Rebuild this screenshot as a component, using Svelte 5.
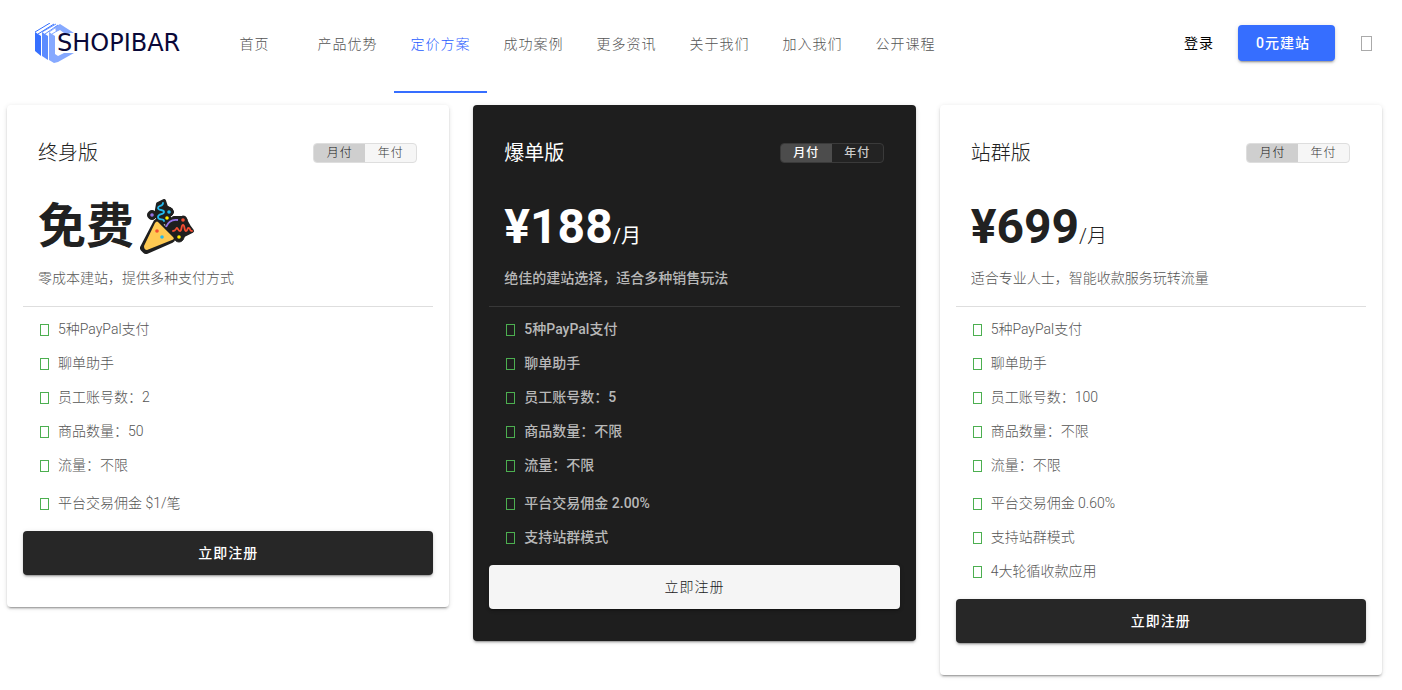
<script>
  const navItems = ['首页', '产品优势', '定价方案', '成功案例', '更多资讯', '关于我们', '加入我们', '公开课程'];
  const activeItem = '定价方案';

  const plans = [
    {
      name: '终身版',
      price: '免费',
      celebrate: true,
      summary: '零成本建站，提供多种支付方式',
      limits: ['5种PayPal支付', '聊单助手', '员工账号数：2', '商品数量：50', '流量：不限'],
      extras: ['平台交易佣金 $1/笔']
    },
    {
      name: '爆单版',
      price: '¥188',
      unit: '/月',
      dark: true,
      summary: '绝佳的建站选择，适合多种销售玩法',
      limits: ['5种PayPal支付', '聊单助手', '员工账号数：5', '商品数量：不限', '流量：不限'],
      extras: ['平台交易佣金 2.00%', '支持站群模式']
    },
    {
      name: '站群版',
      price: '¥699',
      unit: '/月',
      summary: '适合专业人士，智能收款服务玩转流量',
      limits: ['5种PayPal支付', '聊单助手', '员工账号数：100', '商品数量：不限', '流量：不限'],
      extras: ['平台交易佣金 0.60%', '支持站群模式', '4大轮循收款应用']
    }
  ];

  let periods = $state(['月付', '月付', '月付']);
</script>

<header>
  <a class="logo" href="#home">
    <svg width="40" height="40" viewBox="0 0 40 40" aria-hidden="true">
      <path d="M0 9l6 4v20l-6-5z" fill="#3670ff" />
      <path d="M7 9l6 4v24l-6-4z" fill="#5c8cff" />
      <path d="M14 9l6 4v18l3 2 6-3h10L23 39l-4 1-5-3z" fill="#86a9ff" />
      <path d="M20 4l5-3 14 9H29l-4-3-4 2z" fill="#86a9ff" />
      <path d="M0 9L15 0M3 11L19 1" fill="none" stroke="#3670ff" />
      <path d="M7 9L21 1M10 11L23 2" fill="none" stroke="#5c8cff" />
      <path d="M14 9l6-4M17 11l8-5" fill="none" stroke="#86a9ff" />
    </svg>
    <span>SHOPIBAR</span>
  </a>
  <nav>
    {#each navItems as item}
      <a href="#nav" class:active={item === activeItem}>{item}</a>
    {/each}
  </nav>
  <div class="account">
    <a class="login" href="#login">登录</a>
    <button class="start">0元建站</button>
    <button class="more" aria-label="语言"><i></i></button>
  </div>
</header>

<main>
  {#each plans as plan, i}
    <section class="card" class:dark={plan.dark}>
      <div class="head">
        <h2>{plan.name}</h2>
        <div class="toggle">
          {#each ['月付', '年付'] as period}
            <button class:on={periods[i] === period} onclick={() => (periods[i] = period)}>{period}</button>
          {/each}
        </div>
      </div>
      <div class="price">
        <strong>{plan.price}</strong>
        {#if plan.unit}<span>{plan.unit}</span>{/if}
        {#if plan.celebrate}
          <svg width="56" height="56" viewBox="0 0 56 56" aria-hidden="true">
            <g fill="#1f1f1f" stroke="#1f1f1f" stroke-linejoin="round" stroke-linecap="round">
              <path d="M17 24L4 49l2 2L31 40z" stroke-width="8" />
              <path d="M18 5l6-3 2 6 5 3-3 6 3 5-10 2-5-8z" stroke-width="4" />
              <circle cx="12" cy="16" r="4.5" />
              <circle cx="29" cy="13" r="4.5" />
              <path d="M27 24l7-5 10 0 5 9 3 4-8 4-8 2-8-3z" stroke-width="4" />
              <circle cx="43" cy="21" r="4" />
              <circle cx="39" cy="38" r="5" />
            </g>
            <path d="M15 24q2-3 4 0l14 14q2 2-1 3L7 51q-3 0-3-4z" fill="#ffca52" />
            <path d="M23 4c0 4-5 2-5 5s6 1 6 4-6 1-6 5 6 1 6 4" fill="none" stroke="#22b9ee" stroke-width="1.8" stroke-linecap="round" />
            <path d="M26 28c2-5 6-8 12-7" fill="none" stroke="#9472e8" stroke-width="1.8" />
            <path d="M33 32c3 0 3-3 4-3s1 3 3 3 1-6 3-6 1 6 3 6 1-4 3-3 0 3 3 3" fill="none" stroke="#f44d31" stroke-width="1.8" stroke-linecap="round" />
            <circle cx="12" cy="16" r="1.8" fill="#9472e8" />
            <circle cx="29" cy="13" r="1.8" fill="#22b9ee" />
            <circle cx="27" cy="19" r="1.8" fill="#ffeb00" />
            <circle cx="43" cy="21" r="1.8" fill="#f44d31" />
            <circle cx="39" cy="38" r="1.8" fill="#ffeb00" />
            <circle cx="17" cy="32" r="1.8" fill="#f44d31" />
            <circle cx="22" cy="38" r="1.8" fill="#22b9ee" />
          </svg>
        {/if}
      </div>
      <p class="summary">{plan.summary}</p>
      <hr />
      <ul>
        {#each plan.limits as feature}
          <li><i></i>{feature}</li>
        {/each}
      </ul>
      <ul class="extras">
        {#each plan.extras as feature}
          <li><i></i>{feature}</li>
        {/each}
      </ul>
      <button class="register">立即注册</button>
    </section>
  {/each}
</main>

<style>
  :global(body) {
    margin: 0;
    background: #fff;
    color: #212121;
    font-family: Roboto, 'Noto Sans CJK SC', sans-serif;
    font-size: 14px;
    font-weight: 300;
    line-height: 20px;
  }

  button {
    margin: 0;
    padding: 0;
    border: 0;
    background: none;
    color: inherit;
    font: inherit;
    cursor: pointer;
  }

  a {
    color: inherit;
    text-decoration: none;
  }

  header {
    display: flex;
    height: 93px;
  }

  .logo {
    display: flex;
    align-items: center;
    width: 173px;
    height: 86px;
    padding-left: 35px;
    color: #0a0838;
    font-family: 'DejaVu Sans', sans-serif;
    font-size: 24px;
    font-weight: 400;
  }

  .logo span {
    margin-left: -18px;
  }

  nav {
    display: flex;
    flex: 1;
  }

  nav a {
    box-sizing: border-box;
    min-width: 93px;
    padding-top: 34px;
    border-bottom: 2px solid transparent;
    color: #555;
    letter-spacing: 1px;
    text-align: center;
  }

  nav a.active {
    border-color: #366eff;
    color: #1f5cff;
  }

  .account {
    display: flex;
    align-items: center;
    height: 86px;
    padding-right: 30px;
    letter-spacing: 1px;
  }

  .login {
    color: #000;
    font-weight: 400;
  }

  .start {
    height: 36px;
    margin: 0 26px 0 24px;
    padding: 0 25px 0 18px;
    border-radius: 4px;
    background: #366eff;
    box-shadow: 0 3px 1px -2px rgba(0, 0, 0, 0.2), 0 2px 2px rgba(0, 0, 0, 0.14), 0 1px 5px rgba(0, 0, 0, 0.12);
    color: #fff;
    font-weight: 500;
    letter-spacing: 1px;
  }

  .more i {
    display: block;
    box-sizing: border-box;
    width: 11px;
    height: 15px;
    border: 1px solid #aaa;
  }

  main {
    display: grid;
    grid-template-columns: repeat(3, 1fr);
    align-items: start;
    gap: 24px;
    padding: 12px 20px 12px 7px;
  }

  .card {
    padding: 32px 16px;
    border-radius: 4px;
    background: #fff;
    box-shadow: 0 3px 1px -2px rgba(0, 0, 0, 0.2), 0 2px 2px rgba(0, 0, 0, 0.14), 0 1px 5px rgba(0, 0, 0, 0.12);
  }

  .head {
    display: flex;
    align-items: center;
    justify-content: space-between;
    height: 32px;
    padding: 0 16px 0 15px;
  }

  h2 {
    margin: 0;
    font-size: 20px;
    font-weight: 300;
    line-height: 32px;
  }

  .toggle {
    display: flex;
    box-sizing: border-box;
    width: 104px;
    height: 20px;
    overflow: hidden;
    border: 1px solid #dedede;
    border-radius: 4px;
    background: #f6f6f6;
    color: #333;
  }

  .toggle button {
    flex: 1;
    font-size: 12px;
    letter-spacing: 1px;
    line-height: 18px;
  }

  .toggle .on {
    background: #cfcfcf;
    color: #111;
  }

  .price {
    display: flex;
    align-items: baseline;
    height: 64px;
    margin-top: 26px;
    padding: 0 15px;
    font-size: 20px;
    line-height: 64px;
  }

  strong {
    font-size: 48px;
    font-weight: 700;
  }

  .price svg {
    align-self: center;
    margin-left: 6px;
  }

  .summary {
    margin: 9px 15px 18px;
    color: #555;
  }

  hr {
    height: 1px;
    margin: 0 0 5px;
    border: 0;
    background: #dedede;
  }

  ul {
    margin: 0;
    padding: 0 17px;
    color: #555;
    list-style: none;
  }

  .extras {
    margin: 4px 0 11px;
  }

  li {
    display: flex;
    align-items: center;
    height: 34px;
  }

  li i {
    box-sizing: border-box;
    width: 9px;
    height: 12px;
    margin: 2px 9px 0 0;
    border: 1px solid #4caf50;
  }

  .register {
    width: 100%;
    height: 44px;
    border-radius: 4px;
    background: #272727;
    box-shadow: 0 3px 1px -2px rgba(0, 0, 0, 0.2), 0 2px 2px rgba(0, 0, 0, 0.14), 0 1px 5px rgba(0, 0, 0, 0.12);
    color: #fff;
    font-weight: 500;
    letter-spacing: 1px;
  }

  .dark {
    background: #1e1e1e;
    color: #fff;
    font-weight: 500;
  }

  .dark h2 {
    font-weight: 400;
  }

  .dark .price {
    font-weight: 400;
  }

  .dark .toggle {
    border-color: #3a3a3a;
    background: #232323;
    color: #ccc;
  }

  .dark .toggle .on {
    background: #4c4c4c;
    color: #fff;
  }

  .dark .summary,
  .dark ul {
    color: #b8b8b8;
  }

  .dark hr {
    background: #383838;
  }

  .dark .register {
    background: #f5f5f5;
    color: #212121;
    font-weight: 300;
  }
</style>
